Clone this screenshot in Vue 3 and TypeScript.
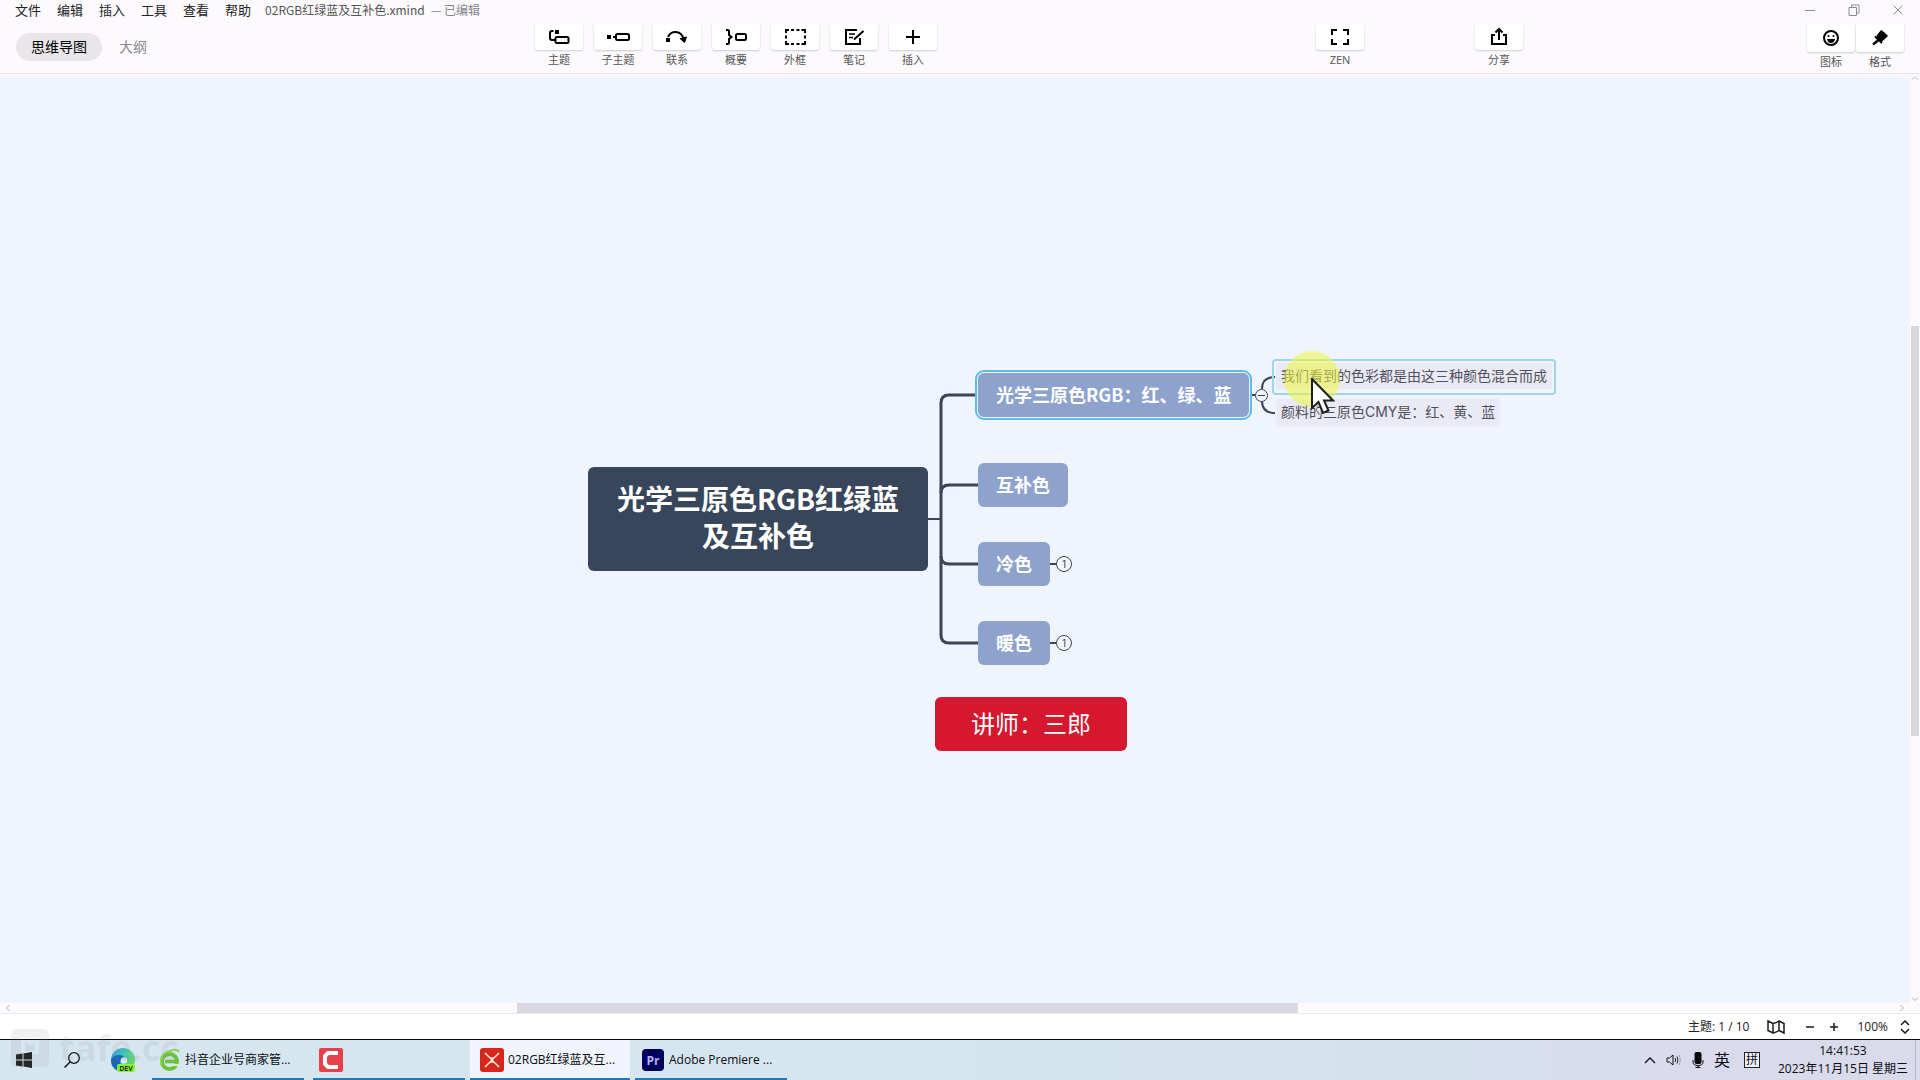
<script setup lang="ts">
interface Tool {
  id: string
  label: string
}

interface Branch {
  id: string
  text: string
  left: number
  top: number
  selected?: boolean
  count?: number
}

const menus: string[] = ['文件', '编辑', '插入', '工具', '查看', '帮助']

const tools: Tool[] = [
  { id: 'topic', label: '主题' },
  { id: 'subtopic', label: '子主题' },
  { id: 'relation', label: '联系' },
  { id: 'summary', label: '概要' },
  { id: 'boundary', label: '外框' },
  { id: 'note', label: '笔记' },
  { id: 'insert', label: '插入' },
]

const branches: Branch[] = [
  { id: 'rgb', text: '光学三原色RGB：红、绿、蓝', left: 478, top: 73, selected: true },
  { id: 'comp', text: '互补色', left: 478, top: 163 },
  { id: 'cold', text: '冷色', left: 478, top: 242, count: 1 },
  { id: 'warm', text: '暖色', left: 478, top: 321, count: 1 },
]
</script>

<template>
  <div class="app">
    <header class="header">
      <div class="titlebar">
        <nav class="menus">
          <button v-for="m in menus" :key="m" type="button">{{ m }}</button>
        </nav>
        <span class="doc">02RGB红绿蓝及互补色.xmind</span>
        <span class="edited">— 已编辑</span>
        <div class="window-buttons">
          <button type="button" aria-label="最小化">
            <svg width="12" height="12" viewBox="0 0 12 12"><path d="M1 6.5H11" /></svg>
          </button>
          <button type="button" aria-label="还原">
            <svg width="12" height="12" viewBox="0 0 12 12"><path d="M1 3.5H8.5V11.5H1ZM3.5 3.5V1H11V9H8.5" /></svg>
          </button>
          <button type="button" aria-label="关闭">
            <svg width="12" height="12" viewBox="0 0 12 12"><path d="M1.500 1.500L10.500 10.500M10.500 1.500L1.500 10.500" /></svg>
          </button>
        </div>
      </div>

      <div class="toolbar">
        <div class="tabs">
          <button type="button" class="tab active">思维导图</button>
          <button type="button" class="tab">大纲</button>
        </div>

        <div class="tools">
          <button v-for="t in tools" :key="t.id" type="button" class="tool">
            <span class="face">
              <svg width="24" height="20" viewBox="0 0 24 20">
                <g v-if="t.id === 'topic'">
                  <rect x="8" y="3" width="4" height="4" fill="#000" stroke="none" />
                  <path d="M6.500 4H5Q3 4 3 6V11Q3 13 5 13H8" />
                  <rect x="8.500" y="10" width="13" height="6" rx="1.500" />
                </g>
                <g v-else-if="t.id === 'subtopic'">
                  <rect x="1" y="8" width="4" height="4" fill="#000" stroke="none" />
                  <path d="M7 10H10" />
                  <rect x="10" y="7" width="13" height="6" rx="1.500" />
                </g>
                <g v-else-if="t.id === 'relation'">
                  <rect x="1" y="11" width="4" height="4" fill="#000" stroke="none" />
                  <path d="M3 10Q5 5 10.500 5Q17 5 19 13" />
                  <path d="M15 11.500L21.500 10L19.500 15.500Z" fill="#000" stroke-width="1" />
                </g>
                <g v-else-if="t.id === 'summary'">
                  <path d="M2 3H3.500Q5 3 5 4.500V8L7.500 10L5 12V15.500Q5 17 3.500 17H2" />
                  <rect x="12" y="7" width="10" height="6" rx="1.500" />
                </g>
                <g v-else-if="t.id === 'boundary'">
                  <path d="M3 6V3H6M8 3H11M13.500 3H16.500M18.500 3H22V6M22 8.500V11.500M22 14V17H18.500M16.500 17H13.500M11 17H8M6 17H3V14M3 11.500V8.500" />
                </g>
                <g v-else-if="t.id === 'note'">
                  <path d="M15 3H4V17H18V11" />
                  <path d="M7 7H13M7 10.500H11" stroke-width="1.500" />
                  <path d="M12 12.500L21.500 4" />
                </g>
                <path v-else d="M12 3V17M5 10H19" />
              </svg>
            </span>
            <span class="label">{{ t.label }}</span>
          </button>
        </div>

        <div class="tools">
          <button type="button" class="tool">
            <span class="face">
              <svg width="24" height="20" viewBox="0 0 24 20">
                <path d="M4 8V3H9M15 3H20V8M20 12V17H15M9 17H4V12" />
              </svg>
            </span>
            <span class="label">ZEN</span>
          </button>
        </div>

        <div class="tools">
          <button type="button" class="tool">
            <span class="face">
              <svg width="24" height="20" viewBox="0 0 24 20">
                <path d="M8 8H5V17H19V8H16M12 13V2M8.500 5.500L12 2L15.500 5.500" />
              </svg>
            </span>
            <span class="label">分享</span>
          </button>
        </div>

        <div class="tools side">
          <button type="button" class="tool">
            <span class="face">
              <svg width="20" height="20" viewBox="0 0 20 20">
                <circle cx="10" cy="10" r="7" />
                <path d="M6 11H14Q13.500 15 10 15Q6.500 15 6 11Z" fill="#000" stroke="none" />
                <circle cx="7.500" cy="8" r="1" fill="#000" stroke="none" />
                <circle cx="12.500" cy="8" r="1" fill="#000" stroke="none" />
              </svg>
            </span>
            <span class="label">图标</span>
          </button>
          <button type="button" class="tool">
            <span class="face">
              <svg width="20" height="20" viewBox="0 0 20 20">
                <path d="M11 2.500L13.500 4L17.500 8L11.500 13.500L6.500 8.500Z" fill="#000" stroke-width="1" />
                <path d="M5 8.500L12 15" />
                <path d="M8.500 12L3 16.500" stroke-width="2.500" />
              </svg>
            </span>
            <span class="label">格式</span>
          </button>
        </div>
      </div>
    </header>

    <div class="work">
      <main class="canvas">
        <div class="board">
          <svg class="links" width="660" height="400" viewBox="0 0 660 400">
            <path d="M428 219H440" stroke-width="2" />
            <path d="M478 95H449Q441 95 441 103V335Q441 343 449 343H478" stroke-width="3" />
            <path d="M478 185H449Q441 185 441 193M478 264H449Q441 264 441 256" stroke-width="3" />
            <path d="M750 95H756M550 264H556M550 343H556" stroke-width="2" />
            <path d="M775 77Q762 77 762 89M775 113Q762 113 762 101" stroke-width="2" />
          </svg>

          <div class="root-topic">光学三原色RGB红绿蓝<br />及互补色</div>

          <div
            v-for="b in branches"
            :key="b.id"
            class="branch"
            :class="{ selected: b.selected }"
            :style="{ left: b.left + 'px', top: b.top + 'px' }"
          >
            {{ b.text }}
            <button v-if="b.count" type="button" class="count">{{ b.count }}</button>
            <button v-if="b.selected" type="button" class="fold" aria-label="折叠"></button>
          </div>

          <div class="leaf picked"><span>我们看到的色彩都是由这三种颜色混合而成</span></div>
          <div class="leaf second"><span>颜料的三原色CMY是：红、黄、蓝</span></div>

          <div class="floating">讲师：三郎</div>

          <div class="glow"></div>
          <svg class="cursor" width="24" height="38" viewBox="0 0 24 38">
            <path d="M1 1V30L7.500 24L12 35L17.500 32.500L13 22.500H22Z" />
          </svg>
        </div>
      </main>
      <div class="vscroll">
        <svg width="8" height="8" viewBox="0 0 8 8"><path d="M1 5.500L4 2.500L7 5.500" /></svg>
        <div class="vtrack"><div class="vthumb"></div></div>
        <svg width="8" height="8" viewBox="0 0 8 8"><path d="M1 2.500L4 5.500L7 2.500" /></svg>
      </div>
    </div>

    <div class="hscroll">
      <svg width="8" height="8" viewBox="0 0 8 8"><path d="M5.500 1L2.500 4L5.500 7" /></svg>
      <div class="htrack"><div class="hthumb"></div></div>
      <svg width="8" height="8" viewBox="0 0 8 8"><path d="M2.500 1L5.500 4L2.500 7" /></svg>
    </div>

    <div class="status">
      <span class="topics">主题: 1 / 10</span>
      <button type="button" class="map" aria-label="导航图">
        <svg width="18" height="14" viewBox="0 0 18 14">
          <path d="M1 1L6 3.500V13L1 10.500ZM6 3.500Q9 3 12 1V10.500Q9 12.500 6 13M12 1L17 3.500V13L12 10.500" />
        </svg>
      </button>
      <button type="button" class="zoom" aria-label="缩小">
        <svg width="10" height="10" viewBox="0 0 10 10"><path d="M1 5H9" /></svg>
      </button>
      <button type="button" class="zoom" aria-label="放大">
        <svg width="10" height="10" viewBox="0 0 10 10"><path d="M1 5H9M5 1V9" /></svg>
      </button>
      <span class="percent">100%</span>
      <button type="button" class="step" aria-label="缩放比例">
        <svg width="10" height="14" viewBox="0 0 10 14"><path d="M1 5L5 1L9 5M1 9L5 13L9 9" /></svg>
      </button>
    </div>

    <footer class="taskbar">
      <button type="button" class="start" aria-label="开始">
        <svg width="16" height="16" viewBox="0 0 16 16">
          <path d="M0 2.500L6.500 1.500V7.500H0ZM7.500 1.400L16 0V7.500H7.500ZM0 8.500H6.500V14.500L0 13.500ZM7.500 8.500H16V16L7.500 14.600Z" fill="#1c1c1c" />
        </svg>
      </button>
      <button type="button" class="search" aria-label="搜索">
        <svg width="16" height="16" viewBox="0 0 16 16">
          <circle cx="10" cy="6" r="5.300" fill="none" stroke="#111" stroke-width="1.300" />
          <path d="M6 10L0.500 15.500" stroke="#111" stroke-width="1.500" />
        </svg>
      </button>
      <button type="button" class="edge" aria-label="Edge Dev">
        <svg width="24" height="24" viewBox="0 0 24 24">
          <defs>
            <linearGradient id="edge-top" x1="0" y1="0" x2="1" y2="0.400">
              <stop offset="0" stop-color="#2b9fd9" />
              <stop offset="0.500" stop-color="#3cc3bd" />
              <stop offset="1" stop-color="#6ad66a" />
            </linearGradient>
          </defs>
          <circle cx="12" cy="12" r="12" fill="url(#edge-top)" />
          <path d="M0 12Q2 7 8 7Q13 7 15 11Q10 9 9 13Q9 19 15 23Q7 25 3 20Q0 17 0 12Z" fill="#1767b8" />
          <circle cx="13" cy="12.500" r="3.200" fill="#d9edf5" />
          <rect x="6" y="16" width="18" height="8" rx="2" fill="#8ef32c" />
          <text x="15" y="22.500" text-anchor="middle" class="dev">DEV</text>
        </svg>
      </button>

      <button type="button" class="task">
        <svg width="20" height="24" viewBox="0 0 20 24">
          <circle cx="9.500" cy="13.500" r="7.500" fill="none" stroke="#6cc23c" stroke-width="4" />
          <path d="M5 13.500H18" stroke="#6cc23c" stroke-width="3.500" />
          <path d="M12 17H20" stroke="#dcebd8" stroke-width="2" />
          <path d="M1 17Q-1 6 10 3Q17 0 19 4" fill="none" stroke="#8ed35a" stroke-width="2" />
        </svg>
        <span>抖音企业号商家管...</span>
      </button>
      <button type="button" class="task camtasia" aria-label="Camtasia">
        <svg width="24" height="24" viewBox="0 0 24 24">
          <rect width="24" height="24" rx="2" fill="#e8404a" />
          <path d="M19 5H9L6 8V16L9 19H19" fill="none" stroke="#fff" stroke-width="4" />
        </svg>
      </button>
      <button type="button" class="task current">
        <svg width="24" height="24" viewBox="0 0 24 24">
          <rect width="24" height="24" rx="3" fill="#d7261c" />
          <path d="M5 5L9 9Q12 11.500 15 9L19 5M5 19L9 15Q12 12.500 15 15L19 19" fill="none" stroke="#ffe9e6" stroke-width="1.500" />
          <path d="M10 10L14 14M14 10L10 14" stroke="#ffe9e6" stroke-width="1.200" />
        </svg>
        <span>02RGB红绿蓝及互...</span>
      </button>
      <button type="button" class="task premiere">
        <svg width="22" height="22" viewBox="0 0 22 22">
          <rect width="22" height="22" rx="4" fill="#00005b" />
          <text x="11" y="15.500" text-anchor="middle" class="pr">Pr</text>
        </svg>
        <span>Adobe Premiere ...</span>
      </button>

      <div class="tray">
        <svg width="12" height="8" viewBox="0 0 12 8"><path d="M1 7L6 2L11 7" fill="none" stroke="#111" stroke-width="1.300" /></svg>
        <svg width="16" height="14" viewBox="0 0 16 14">
          <path d="M1 5H3.500L7 2V12L3.500 9H1Z" fill="none" stroke="#111" />
          <path d="M9 5Q10.500 7 9 9M11 3.500Q13 7 11 10.500" fill="none" stroke="#222" />
          <path d="M13 2Q16 7 13 12" fill="none" stroke="#a5aab8" />
        </svg>
        <svg width="12" height="16" viewBox="0 0 12 16">
          <rect x="2.500" y="0" width="7" height="12" rx="2" fill="#0a0a0a" />
          <path d="M1 8V10Q1 13.500 6 13.500Q11 13.500 11 10V8M6 13V16M3.500 15.500H8.500" fill="none" stroke="#0a0a0a" />
        </svg>
        <span class="lang">英</span>
        <span class="ime">拼</span>
        <div class="clock">
          <time>14:41:53</time>
          <span>2023年11月15日 星期三</span>
        </div>
      </div>

      <div class="watermark">
        <svg width="38" height="38" viewBox="0 0 38 38">
          <path fill-rule="evenodd" d="M6 0H32Q38 0 38 6V32Q38 38 32 38H6Q0 38 0 32V6Q0 0 6 0ZM10 9V25H28V9ZM14 12L19 17L24 12V22H14Z" fill="currentColor" />
        </svg>
        <span>tafe.cc</span>
      </div>
    </footer>
  </div>
</template>

<style>
body {
  margin: 0;
}
</style>

<style scoped>
.app {
  display: flex;
  flex-direction: column;
  min-height: 100vh;
  overflow: hidden;
  background: #fdfafe;
  color: #222;
  font-family: 'Open Sans', 'Noto Sans CJK SC', sans-serif;
  font-size: 12px;
  line-height: 16px;
}

button {
  margin: 0;
  padding: 0;
  border: 0;
  background: none;
  color: inherit;
  font: inherit;
}

svg {
  display: block;
  flex: none;
}

/* header */
.header {
  position: relative;
  z-index: 1;
  height: 73px;
  border-bottom: 1px solid #e6e4ec;
  box-shadow: 0 3px 0 #f8f6fc;
}

.titlebar {
  display: flex;
  align-items: center;
  height: 20px;
  padding-left: 7px;
}

.menus {
  display: flex;
}

.menus button {
  padding: 0 8px;
  font-size: 13px;
  white-space: nowrap;
}

.doc {
  margin-left: 6px;
  color: #555;
  font-family: 'Noto Sans CJK SC', sans-serif;
}

.edited {
  margin-left: 6px;
  color: #858388;
  font-family: 'Noto Sans CJK SC', sans-serif;
}

.window-buttons {
  display: flex;
  margin-left: auto;
}

.window-buttons button {
  display: flex;
  justify-content: center;
  width: 44px;
}

.window-buttons path {
  fill: none;
  stroke: #8d8b92;
}

.toolbar {
  display: grid;
  grid-template-columns: 535fr 781fr 159fr 332fr 113fr;
  padding-top: 4px;
}

.tabs {
  display: flex;
  gap: 3px;
  padding: 9px 0 0 16px;
}

.tab {
  height: 28px;
  padding: 0 14px;
  border-radius: 14px;
  color: #8c8a90;
  font-size: 14px;
}

.tab.active {
  padding: 0 15px;
  background: #e9e6ea;
  color: #000;
}

.tools {
  display: flex;
  align-items: flex-start;
  gap: 11px;
}

.tool {
  display: flex;
  flex-direction: column;
  width: 48px;
}

.face {
  display: flex;
  align-items: center;
  justify-content: center;
  height: 26px;
  border-radius: 0 0 3px 3px;
  background: #fff;
  box-shadow: 0 1px 2px #cdcad2;
  clip-path: inset(0 -3px -3px -3px);
}

.face svg {
  fill: none;
  stroke: #000;
  stroke-width: 2px;
}

.label {
  margin-top: 2px;
  color: #555;
  font-size: 11px;
  text-align: center;
}

.side {
  gap: 1px;
}

.side .face {
  height: 28px;
}

/* canvas */
.work {
  display: flex;
  flex: 1;
}

.canvas {
  position: relative;
  flex: 1;
  min-height: 600px;
  overflow: hidden;
  background: #f0f4fe;
}

.board {
  position: absolute;
  top: calc(50% - 239px);
  left: calc(50% - 455px);
  font-family: 'Noto Sans CJK SC', sans-serif;
}

.links {
  position: absolute;
  top: 0;
  left: 0;
  overflow: visible;
  fill: none;
  stroke: #3b4557;
}

.root-topic {
  position: absolute;
  top: 167px;
  left: 88px;
  box-sizing: border-box;
  width: 340px;
  height: 104px;
  padding-top: 13px;
  border-radius: 6px;
  background: #38465b;
  color: #fff;
  font-size: 28px;
  font-weight: 700;
  line-height: 37px;
  text-align: center;
}

.branch {
  position: absolute;
  height: 44px;
  padding: 0 18px;
  border-radius: 6px;
  background: #8da2cc;
  color: #fff;
  font-size: 18px;
  font-weight: 700;
  line-height: 42px;
  white-space: nowrap;
}

.branch.selected {
  outline: 2px solid #5fbbe6;
  outline-offset: 1px;
  box-shadow: 0 0 0 1px #e6f6fd;
}

.count,
.fold {
  position: absolute;
  box-sizing: border-box;
  border: 1px solid #3b4557;
  border-radius: 50%;
  background: #f4f6fd;
}

.count {
  top: 14px;
  right: -22px;
  width: 16px;
  height: 16px;
  color: #3b4557;
  font-family: Inter, sans-serif;
  font-size: 10px;
  font-weight: 400;
  line-height: 14px;
}

.fold {
  top: 16px;
  right: -19px;
  width: 13px;
  height: 13px;
}

.fold::before {
  content: '';
  display: block;
  height: 1px;
  margin: 0 2px;
  background: #3b4557;
}

.leaf {
  position: absolute;
  color: #50505c;
  font-family: Inter, 'Noto Sans CJK SC', sans-serif;
  font-size: 14px;
  line-height: 26px;
  white-space: nowrap;
}

.leaf span {
  display: block;
  background: #e9eaf5;
}

.picked {
  top: 59px;
  left: 772px;
  padding: 2px 2px 4px;
  border: 2px solid #9fd6ee;
  border-radius: 4px;
}

.picked span {
  padding: 0 5px;
}

.second {
  top: 99px;
  left: 777px;
}

.second span {
  padding: 0 4px;
  box-shadow: 0 1px 3px #e4e4f0;
}

.floating {
  position: absolute;
  top: 397px;
  left: 435px;
  width: 192px;
  height: 54px;
  border-radius: 6px;
  background: #d6182f;
  color: #fff;
  font-size: 24px;
  line-height: 52px;
  text-align: center;
  white-space: nowrap;
}

.glow {
  position: absolute;
  top: 51px;
  left: 784px;
  width: 56px;
  height: 56px;
  border-radius: 50%;
  background: rgba(238, 245, 60, 0.55);
}

.cursor {
  position: absolute;
  top: 78px;
  left: 811px;
  fill: #fff;
  stroke: #1d1d22;
  stroke-width: 2px;
}

/* scroll bars */
.vscroll {
  display: flex;
  flex-direction: column;
  align-items: center;
  width: 10px;
  background: #fcfafe;
}

.vscroll svg,
.hscroll svg {
  fill: none;
  stroke: #b3b0ba;
}

.vtrack {
  display: flex;
  flex: 1;
  flex-direction: column;
  width: 8px;
}

.vtrack::before {
  content: '';
  flex: 243 0 0;
}

.vtrack::after {
  content: '';
  flex: 258 0 0;
}

.vthumb {
  flex: 409 0 0;
  background: #d8d8da;
}

.hscroll {
  display: flex;
  align-items: center;
  height: 10px;
  padding: 0 14px 0 4px;
  background: #fdfafe;
}

.htrack {
  display: flex;
  flex: 1;
  height: 10px;
}

.htrack::before {
  content: '';
  flex: 505 0 0;
}

.htrack::after {
  content: '';
  flex: 600 0 0;
}

.hthumb {
  flex: 781 0 0;
  background: #dad9e2;
}

/* status bar */
.status {
  display: flex;
  align-items: center;
  justify-content: flex-end;
  box-sizing: border-box;
  height: 26px;
  padding-right: 10px;
  border-top: 1px solid #ebe9ee;
  background: #fff;
}

.status svg {
  fill: none;
  stroke: #1b1b1b;
  stroke-width: 1.5px;
}

.map {
  margin: 0 20px 0 18px;
}

.zoom {
  margin-right: 14px;
}

.percent {
  margin: 0 12px 0 4px;
}

/* taskbar */
.taskbar {
  position: relative;
  display: flex;
  align-items: center;
  height: 40px;
  padding-left: 16px;
  border-top: 1px solid #05080c;
  background: linear-gradient(90deg, #d6e6f0, #d6e6ee 40%, #d3e2ec 72%, #d9dcee 84%, #d9daea);
  color: #0c0c12;
}

.search {
  margin-left: 32px;
}

.edge {
  margin: 0 17px 0 31px;
}

.dev {
  fill: #10300a;
  font-size: 7px;
  font-weight: 700;
}

.pr {
  fill: #b9b0ff;
  font-size: 12px;
  font-weight: 700;
}

.task {
  display: flex;
  align-items: center;
  gap: 5px;
  box-sizing: border-box;
  width: 152px;
  height: 40px;
  padding: 2px 0 0 8px;
  border-bottom: 2px solid #1e7ab8;
  white-space: nowrap;
}

.camtasia {
  margin-left: 9px;
  padding-left: 6px;
}

.current {
  gap: 4px;
  width: 160px;
  margin: 0 5px;
  padding-left: 10px;
  background: #f1f4fc;
}

.premiere {
  padding-left: 7px;
}

.tray {
  display: flex;
  align-items: center;
  gap: 10px;
  height: 40px;
  margin-left: auto;
  margin-right: 4px;
  padding-right: 7px;
  border-right: 1px solid #b4b6c6;
}

.lang {
  font-size: 16px;
}

.ime {
  box-sizing: border-box;
  width: 16px;
  height: 16px;
  margin: 0 8px 0 4px;
  border: 1px solid #222;
  background: #f3f4fb;
  line-height: 14px;
  text-align: center;
}

.clock {
  display: flex;
  flex-direction: column;
  align-items: center;
  gap: 2px;
  white-space: nowrap;
}

.watermark {
  position: absolute;
  top: -11px;
  left: 11px;
  display: flex;
  align-items: center;
  gap: 10px;
  color: rgba(130, 130, 140, 0.12);
  font-size: 36px;
  font-weight: 700;
  line-height: 38px;
  pointer-events: none;
}
</style>
